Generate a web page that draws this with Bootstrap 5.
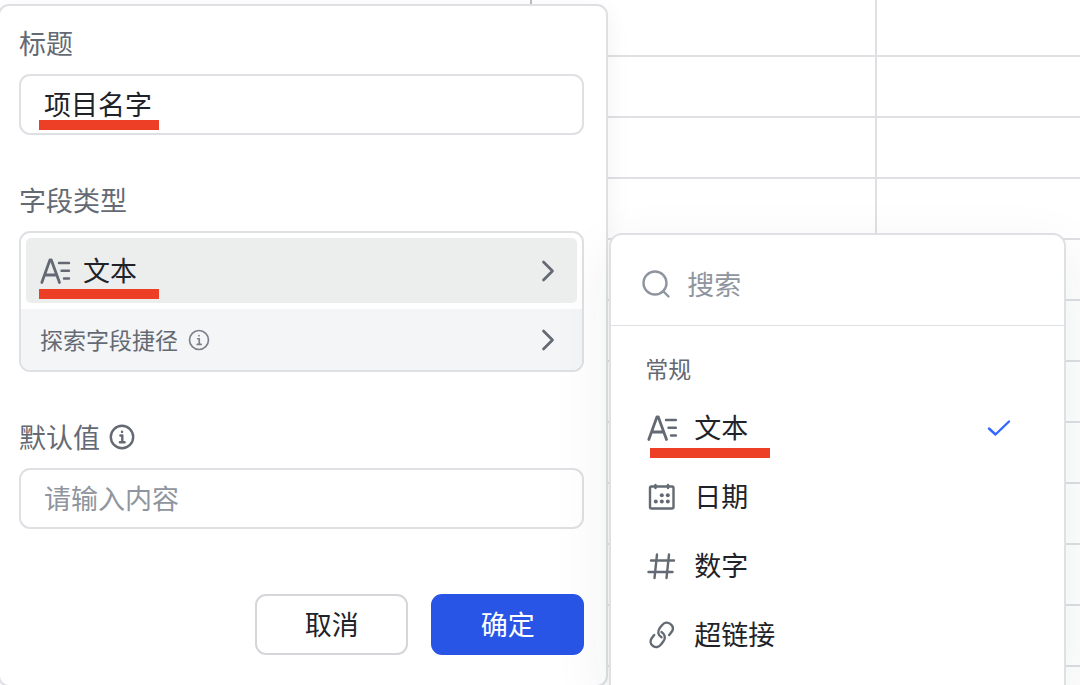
<!DOCTYPE html>
<html lang="zh-CN">
<head>
<meta charset="utf-8">
<meta name="viewport" content="width=device-width, initial-scale=1">
<title>字段设置</title>
<link href="https://cdn.jsdelivr.net/npm/bootstrap@5.3.0/dist/css/bootstrap.min.css" rel="stylesheet">
<style>
  :root { --line: #dee0e3; --ink: #1f2329; --muted: #646a73; --hint: #8f959e; --brand: #2955e7; --accent: #ec3f26; }
  body { font-family: "Noto Sans CJK SC", sans-serif; font-size: 27px; line-height: 40px; color: var(--ink); background: #fff; }
  .stage { height: 100vh; }
  svg { display: block; flex: none; fill: none; stroke: currentColor; stroke-width: 2.4; stroke-linecap: round; stroke-linejoin: round; }

  /* sheet behind the panels */
  .sheet { width: 100%; table-layout: fixed; border-collapse: collapse; }
  .sheet td { height: 61px; padding: 0; border-bottom: 2px solid var(--line); border-right: 2px solid var(--line); }
  .sheet td:last-child { border-right: 0; }
  .sheet tr:first-child td { height: 56px; }
  .sheet tr:first-child td:first-child { border-right-color: #babcc0; }
  .sheet .c-a { width: 49.2%; }
  .sheet .c-b { width: 31.9%; }

  /* field editor */
  .editor { flex: 0 0 56.5%; margin: 4px 0 0 -2px; padding: 17px 22px 30px 19px; background: #fff; border: 2px solid var(--line); border-radius: 11px; box-shadow: 0 6px 24px rgba(31,35,41,.06); }
  .field { margin-bottom: 45px; }
  .field-label { color: var(--muted); margin-bottom: 11px; }
  .editor .form-control { height: 61px; padding: 0 23px 2px; font-size: 27px; line-height: 40px; color: var(--ink); border: 2px solid var(--line); border-radius: 11px; background: transparent; }
  .form-control::placeholder { color: var(--hint); }
  .type-box { border: 2px solid var(--line); border-radius: 11px; overflow: hidden; }
  .type-current { height: 65px; margin: 5px 5px 6px; padding: 0 20px 0 13px; border: 0; border-radius: 5px; background: #eceeed; color: var(--ink); }
  .type-shortcut { height: 61px; padding: 0 25px 0 19px; border: 0; background: #f4f5f7; color: var(--muted); font-size: 23px; }
  .type-shortcut .i-tip { color: #7d828a; stroke-width: 2; }
  .type-current span, .type-shortcut span, .type-item span { padding-bottom: 2px; }
  .marked::after { content: ""; position: absolute; left: 20px; bottom: 5px; width: 120px; height: 10px; background: var(--accent); }
  .type-current.marked::after { left: 13px; bottom: 4px; }
  .actions { margin-top: 65px; gap: 23px; }
  .actions .btn { width: 153px; height: 61px; padding: 0 0 2px; font-size: 27px; line-height: 40px; border-radius: 11px; border-width: 2px; }
  .btn-plain { --bs-btn-color: var(--ink); --bs-btn-border-color: #d5d6d9; --bs-btn-bg: #fff; }
  .btn-brand { --bs-btn-color: #fff; --bs-btn-border-color: var(--brand); --bs-btn-bg: var(--brand); }

  /* type menu */
  .type-menu { flex: 0 0 42.3%; margin: 233px 0 0 1px; background: #fff; border: 2px solid var(--line); border-bottom: 0; border-radius: 13px 13px 0 0; box-shadow: 0 20px 60px rgba(31,35,41,.08); }
  .type-search { height: 91px; padding: 7px 30px 0; gap: 16px; border-bottom: 1px solid var(--line); color: var(--hint); }
  .type-search .form-control { padding: 0; font-size: 27px; line-height: 40px; border: 0; background: transparent; }
  .group-title { margin: 0; padding: 25px 34px 8px; font-size: 23px; line-height: 34px; font-weight: 400; color: var(--muted); }
  .type-item { height: 69px; padding: 0 53px 0 36px; gap: 17px; border: 0; background: transparent; color: var(--ink); }
  .type-item.marked::after { left: 39px; bottom: 4px; }
  .type-item .i-check { color: #3366ff; }
  .glyph { color: var(--muted); }
</style>
</head>
<body>
<svg width="0" height="0" class="position-absolute" aria-hidden="true">
  <symbol id="i-text" viewBox="0 0 30 28"><path stroke-width="2.8" d="M1.800 25.500 10 2.800h1.200L19.500 25.500M4.800 18h11.800"/><path d="M19 6h10M21.500 13.800H29M24 21.500H29"/></symbol>
  <symbol id="i-info" viewBox="0 0 26 26"><circle cx="13" cy="13" r="11.2"/><path d="M11.400 11.500h1.900v6.500M10.900 18.200h4.700M13 7.700v.2"/></symbol>
  <symbol id="i-next" viewBox="0 0 14 22"><path stroke-width="2.700" d="M2.500 2l9 9-9 9"/></symbol>
</svg>

<main class="stage position-relative overflow-hidden">
  <table class="sheet" aria-hidden="true">
    <colgroup><col class="c-a"><col class="c-b"><col></colgroup>
    <tbody>
      <tr><td></td><td></td><td></td></tr>
      <tr><td></td><td></td><td></td></tr>
      <tr><td></td><td></td><td></td></tr>
      <tr><td></td><td></td><td></td></tr>
      <tr><td></td><td></td><td></td></tr>
      <tr><td></td><td></td><td></td></tr>
      <tr><td></td><td></td><td></td></tr>
      <tr><td></td><td></td><td></td></tr>
      <tr><td></td><td></td><td></td></tr>
      <tr><td></td><td></td><td></td></tr>
      <tr><td></td><td></td><td></td></tr>
      <tr><td></td><td></td><td></td></tr>
    </tbody>
  </table>

  <div class="position-absolute top-0 start-0 w-100 h-100 d-flex">
    <form class="editor align-self-start">
      <div class="field">
        <label class="field-label d-block" for="title">标题</label>
        <div class="marked position-relative"><input class="form-control" id="title" type="text" value="项目名字"></div>
      </div>
      <div class="field">
        <div class="field-label" id="type-label">字段类型</div>
        <div class="type-box d-flex flex-column" role="group" aria-labelledby="type-label">
          <button type="button" class="type-current marked position-relative d-flex align-items-center">
            <svg class="glyph" width="32" height="28"><use href="#i-text"/></svg>
            <span class="ms-2 ps-1">文本</span>
            <svg class="glyph ms-auto" width="18" height="22"><use href="#i-next"/></svg>
          </button>
          <button type="button" class="type-shortcut d-flex align-items-center">
            <span>探索字段捷径</span>
            <svg class="i-tip ms-2 me-auto" width="26" height="22"><use href="#i-info"/></svg>
            <svg class="glyph" width="18" height="22"><use href="#i-next"/></svg>
          </button>
        </div>
      </div>
      <div class="field">
        <div class="field-label d-flex align-items-center">
          <label for="default">默认值</label>
          <svg class="ms-2" width="28" height="26"><use href="#i-info"/></svg>
        </div>
        <input class="form-control" id="default" type="text" placeholder="请输入内容">
      </div>
      <div class="actions d-flex justify-content-end">
        <button type="button" class="btn btn-plain">取消</button>
        <button type="submit" class="btn btn-brand">确定</button>
      </div>
    </form>

    <section class="type-menu" aria-label="字段类型">
      <div class="type-search d-flex align-items-center">
        <svg width="30" height="30" viewBox="0 0 30 30"><circle cx="14" cy="14" r="11.5"/><path d="M22.500 22.500l5 5"/></svg>
        <input class="form-control shadow-none" type="search" placeholder="搜索" aria-label="搜索">
      </div>
      <h2 class="group-title">常规</h2>
      <button type="button" class="type-item marked position-relative w-100 d-flex align-items-center">
        <svg class="glyph" width="30" height="28"><use href="#i-text"/></svg>
        <span>文本</span>
        <svg class="i-check ms-auto" width="24" height="18" viewBox="0 0 24 18"><path d="M2 9.500l6.500 6L22 2.500"/></svg>
      </button>
      <button type="button" class="type-item w-100 d-flex align-items-center">
        <svg class="glyph" width="30" height="28" viewBox="0 0 30 28"><rect x="3" y="3.500" width="23.500" height="22" rx="1.500"/><path d="M8.500 2v3M21 2v3"/><g fill="currentColor" stroke="none"><circle cx="14.800" cy="12.200" r="2"/><circle cx="20.800" cy="12.200" r="2"/><circle cx="8.800" cy="18.500" r="2"/><circle cx="14.800" cy="18.500" r="2"/><circle cx="20.800" cy="18.500" r="2"/></g></svg>
        <span>日期</span>
      </button>
      <button type="button" class="type-item w-100 d-flex align-items-center">
        <svg class="glyph" width="30" height="28" viewBox="0 0 30 28"><path d="M4 8.500h23M1.500 20h24M10 2.500 7.500 26M22 2.500 19.500 26"/></svg>
        <span>数字</span>
      </button>
      <button type="button" class="type-item w-100 d-flex align-items-center">
        <svg class="glyph" width="30" height="28" viewBox="0 0 30 28"><path d="M14.500 16.300C10.800 14 10.300 10.500 12.700 7.100L15.200 4.100C17.300 1.200 20.600.9 23.300 2.900 26.300 5 26.600 8 24.700 10.800L22.200 14"/><path d="M14.500 11C18.200 13.300 18.800 17 16.400 20.300L14 23.400C11.900 26.400 8.700 26.900 6 25 3.200 23 2.900 19.800 4.800 17L7.200 13.900"/></svg>
        <span>超链接</span>
      </button>
    </section>
  </div>
</main>
<script src="https://cdn.jsdelivr.net/npm/bootstrap@5.3.0/dist/js/bootstrap.bundle.min.js"></script>
</body>
</html>
